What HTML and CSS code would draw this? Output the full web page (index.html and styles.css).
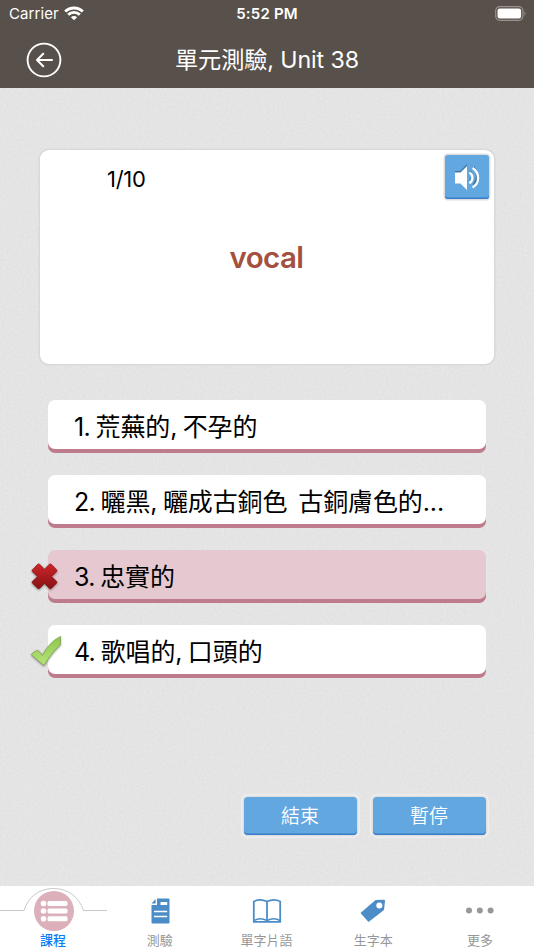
FILE: index.html
```html
<!DOCTYPE html>
<html lang="zh-Hant">
<head>
<meta charset="utf-8">
<title>單元測驗, Unit 38</title>
<link rel="stylesheet" href="styles.css">
</head>
<body>
<div class="app">
  <header class="top">
    <div class="status">
      <div class="carrier"><span>Carrier</span>
        <svg width="20" height="15" viewBox="0 0 20 15"><path d="M10 14.200 6.900 11.200a4.300 4.300 0 0 1 6.200 0z" fill="#fff"/><path d="M4.200 8.800a8.200 8.200 0 0 1 11.600 0M1.200 5.500a12.700 12.700 0 0 1 17.600 0" fill="none" stroke="#fff" stroke-width="2.900"/></svg>
      </div>
      <div class="time">5:52 PM</div>
      <svg class="battery" width="32" height="15" viewBox="0 0 32 15"><rect x=".7" y=".7" width="27.2" height="13.6" rx="4" fill="none" stroke="#99928e" stroke-width="1.2"/><rect x="2.5" y="2.5" width="23.6" height="10" rx="2.2" fill="#fff"/><path d="M29.4 5q2 2.5 0 5z" fill="#99928e"/></svg>
    </div>
    <div class="nav">
      <svg class="back" width="36" height="36" viewBox="0 0 36 36" fill="none" stroke="#fff"><circle cx="18" cy="18" r="16.4" stroke-width="1.9"/><path d="M26 18H11M17.2 11.8 11 18l6.200 6.200" stroke-width="2.100" stroke-linecap="round" stroke-linejoin="round"/></svg>
      <h1>單元測驗, Unit 38</h1>
    </div>
  </header>
  <main>
    <svg class="grain" width="534" height="798"><filter id="g" x="0" y="0" width="100%" height="100%" color-interpolation-filters="sRGB"><feTurbulence type="fractalNoise" baseFrequency=".45" numOctaves="2" seed="4"/><feColorMatrix type="matrix" values=".04 0 0 0 .875  .04 0 0 0 .875  .04 0 0 0 .875  0 0 0 0 1"/></filter><rect width="534" height="798" filter="url(#g)"/></svg>
    <section class="card">
      <span class="count">1/10</span>
      <strong class="word">vocal</strong>
      <button class="sound" aria-label="speak"><svg width="26" height="28" viewBox="0 0 26 28"><g transform="translate(0 -1)" fill="#3f79a6"><path d="M1 9h5l7-7v24l-7-7H1z"/><path d="M16 9q4 5 0 10M19.500 5q7 9 0 18" fill="none" stroke="#3f79a6" stroke-width="2"/></g><path d="M1 9.500h5.500L13 3v24l-6.500-6.500H1z" fill="#fff"/><path d="M15.400 9.500q3 1.700 3 5.200t-3 5.500M18.600 5q5.500 3.800 5.500 10t-5.500 9.500" fill="none" stroke="#fff" stroke-width="2.300"/></svg></button>
    </section>
    <ol class="answers">
      <li><span class="n">1.</span> 荒蕪的, 不孕的</li>
      <li><span class="n">2.</span> 曬黑, 曬成古銅色&nbsp; 古銅膚色的...</li>
      <li class="wrong"><span class="n">3.</span> 忠實的
        <svg class="mark cross" width="29" height="29" viewBox="0 0 30 30"><defs><linearGradient id="r" x2="0" y2="1"><stop stop-color="#cf252a"/><stop offset="1" stop-color="#861114"/></linearGradient></defs><path d="M2.500 8 8 2.400q1-.8 2 0l5 5 5-5q1-.8 2 0L27.500 8q.8 1 0 2l-5.200 5 5.200 5q.8 1 0 2L22 27.300q-1 .8-2 0l-5-5-5 5q-1 .8-2 0L2.500 22q-.8-1 0-2l5.200-5-5.200-5q-.8-1 0-2z" fill="url(#r)" stroke="#8b1417" stroke-width=".7"/></svg>
      </li>
      <li><span class="n">4.</span> 歌唱的, 口頭的
        <svg class="mark check" width="32" height="32" viewBox="0 0 32 32"><defs><linearGradient id="v" x2="0" y2="1"><stop stop-color="#91c84c"/><stop offset="1" stop-color="#b5e378"/></linearGradient></defs><path d="M1.200 19.500Q4 16.500 7.500 15.200 10.500 17 12.300 20.500 20 6.500 30.500 1.500L30.300 10Q22 17 14 30.500 8 25.500 1.200 19.500z" fill="url(#v)" stroke="#749e43" stroke-width=".7" stroke-linejoin="round"/></svg>
      </li>
    </ol>
    <div class="actions"><button>結束</button><button>暫停</button></div>
  </main>
  <footer>
    <div class="tab active"><svg class="curve" width="107" height="46" viewBox="0 0 107 46"><path d="M0 24.500H24C28 11 39 2.500 53.500 2.500S79 11 83.500 24.500H107" fill="none" stroke="#c9c9c9"/><circle cx="54" cy="25" r="20" fill="#dbb0ba"/><g fill="#fff"><circle cx="43.500" cy="17.500" r="2.800"/><circle cx="43.500" cy="25" r="2.800"/><circle cx="43.500" cy="32.700" r="2.800"/><rect x="47.500" y="15" width="20" height="5" rx="1.500"/><rect x="47.500" y="22.500" width="20" height="5" rx="1.500"/><rect x="47.500" y="30.200" width="20" height="5" rx="1.500"/></g></svg><span>課程</span></div>
    <div class="tab"><svg width="40" height="46" viewBox="0 0 40 46"><path d="M17 12.500h11.500q1 0 1 1v23q0 1-1 1h-16q-1 0-1-1V19H17z" fill="#4d8dc7"/><path d="M11.500 17.500 15.600 13v4.500z" fill="#4d8dc7"/><path d="M14 25.500h13.200M14 30.500h13.200" stroke="#fff" stroke-width="1.600"/><path d="M20.500 16h6.700v3h-6.700z" fill="#fff"/></svg><span>測驗</span></div>
    <div class="tab"><svg width="40" height="46" viewBox="0 0 40 46" fill="none" stroke="#4d8dc7" stroke-width="1.800"><path d="M6.800 15.500Q13 12.300 20 15.500 27 12.300 33.200 15.500V35.800H6.800zM20 15.500V35.800"/><path d="M7 34.500Q13 30.800 20 34.500 27 30.800 33 34.500" stroke-width="1.500"/></svg><span>單字片語</span></div>
    <div class="tab"><svg width="40" height="46" viewBox="0 0 40 46"><path d="M22.500 14 31 13.700Q32.200 13.700 32 15L31 24 15.500 36 7.500 27z" fill="#4d8dc7"/><circle cx="26.300" cy="19.500" r="3" fill="#fff"/></svg><span>生字本</span></div>
    <div class="tab"><svg width="40" height="46" viewBox="0 0 40 46" fill="#989898"><circle cx="9" cy="24.500" r="3"/><circle cx="19.800" cy="24.500" r="3"/><circle cx="30.600" cy="24.500" r="3"/></svg><span>更多</span></div>
  </footer>
</div>
</body>
</html>
```
FILE: styles.css
```css
* { box-sizing: border-box; }
body { margin: 0; font-family: Inter, "Noto Sans CJK TC", sans-serif; color: #000; }
button { border: 0; padding: 0; font: inherit; }
.app { width: 534px; height: 950px; display: flex; flex-direction: column; overflow: hidden; }
.top { height: 88px; background: #58504a; color: #fff; }
.status { height: 28px; padding: 0 7px 0 9px; display: grid; grid-template-columns: 1fr auto 1fr; align-items: center; font-size: 15px; line-height: 28px; }
.carrier { display: flex; align-items: center; gap: 5px; letter-spacing: .1px; }
.carrier svg { margin-top: -2px; }
.time { font-weight: 600; letter-spacing: .2px; padding-right: 2px; }
.battery { justify-self: end; margin-top: -2px; }
.nav { height: 60px; display: grid; grid-template-columns: 36px 1fr 36px; align-items: center; padding: 2px 26px 0; }
.nav h1 { margin: 0; text-align: center; font-size: 23.200px; font-weight: 370; line-height: 60px; letter-spacing: -.1px; }
.back { margin-top: -1px; }
main { position: relative; height: 798px; background: #e4e4e4; padding: 62px 40px 0; }
.grain { position: absolute; inset: 0; }
.card { position: relative; width: 454px; height: 214px; background: #fff; border-radius: 9px; box-shadow: 0 0 0 1.500px #d9d9d9; display: flex; justify-content: center; align-items: center; }
.count { position: absolute; left: 67px; top: 16px; font-size: 22px; line-height: 26px; letter-spacing: -.3px; }
.word { color: #a4503e; font-size: 29.500px; font-weight: 600; line-height: 36px; letter-spacing: -.6px; padding-right: 1px; }
.sound { position: absolute; right: 5px; top: 5px; width: 44px; height: 44px; border-radius: 3px; background: #62a7df; box-shadow: inset 0 -1.500px #397dcb, 0 0 0 1.500px #dedede; display: flex; align-items: center; justify-content: center; }
.answers { position: relative; list-style: none; margin: 36px 0 0; padding: 0 8px; display: grid; gap: 26px; }
.answers li { position: relative; height: 49px; border-radius: 7px; box-shadow: 0 4px #bd7b8b; background: #fff; padding-left: 26px; font-size: 25px; line-height: 55px; white-space: nowrap; font-weight: 370; word-spacing: -1.400px; letter-spacing: -.12px; }
.answers .n { letter-spacing: -.7px; }
.answers .wrong { background: #e6c8d0; }
.mark { position: absolute; left: -18px; top: 11px; filter: drop-shadow(0 1px 1px #0006); }
.cross { left: -18px; top: 12px; }
.check { left: -18.500px; top: 10px; }
.actions { position: relative; display: flex; gap: 16px; margin: 123px 8px 0 204px; }
.actions button { width: 113px; height: 38px; border-radius: 4px; color: #fff; background: #62a7df; box-shadow: inset 0 -1.500px #397dcb, 0 0 0 1.500px #dfdfdf, 0 0 0 3px #efefef; font-size: 19px; line-height: 37px; font-weight: 350; padding-right: 1px; }
footer { height: 64px; background: #fff; display: grid; grid-template-columns: repeat(5, 1fr); }
.tab { display: flex; flex-direction: column; align-items: center; font-size: 13px; line-height: 16px; color: #979797; position: relative; left: -.5px; }
.tab span { white-space: nowrap; }
.tab.active { color: #087df5; font-weight: 500; }
.curve { flex: none; }
```
